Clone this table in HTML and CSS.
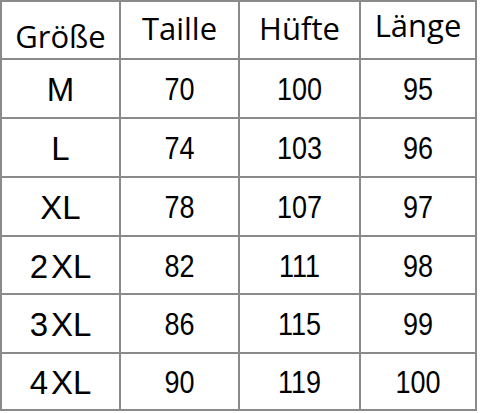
FILE: index.html
```html
<!DOCTYPE html>
<html lang="de">
<head>
<meta charset="utf-8">
<title>Größentabelle</title>
<link rel="stylesheet" href="styles.css">
</head>
<body>
<div class="chart">
  <div class="cell head h1"><span>Größe</span></div>
  <div class="cell head h2"><span>Taille</span></div>
  <div class="cell head h3"><span>Hüfte</span></div>
  <div class="cell head h4"><span>Länge</span></div>

  <div class="cell size"><span>M</span></div>
  <div class="cell num"><span>70</span></div>
  <div class="cell num"><span>100</span></div>
  <div class="cell num"><span>95</span></div>

  <div class="cell size"><span>L</span></div>
  <div class="cell num"><span>74</span></div>
  <div class="cell num"><span>103</span></div>
  <div class="cell num"><span>96</span></div>

  <div class="cell size"><span>XL</span></div>
  <div class="cell num"><span>78</span></div>
  <div class="cell num"><span>107</span></div>
  <div class="cell num"><span>97</span></div>

  <div class="cell size"><span><b class="n">2</b>XL</span></div>
  <div class="cell num"><span>82</span></div>
  <div class="cell num"><span>111</span></div>
  <div class="cell num"><span>98</span></div>

  <div class="cell size"><span><b class="n">3</b>XL</span></div>
  <div class="cell num"><span>86</span></div>
  <div class="cell num"><span>115</span></div>
  <div class="cell num"><span>99</span></div>

  <div class="cell size"><span><b class="n">4</b>XL</span></div>
  <div class="cell num"><span>90</span></div>
  <div class="cell num"><span>119</span></div>
  <div class="cell num"><span>100</span></div>
</div>
</body>
</html>
```
FILE: styles.css
```css
html, body {
  margin: 0;
  padding: 0;
  background: #ffffff;
}

.chart {
  display: grid;
  grid-template-columns: 117px 117px 119px 114px;
  grid-template-rows: 56px 57px 57px 57px 56px 57px 55px;
  gap: 2px;
  padding: 2px;
  width: max-content;
  background: #8a8a8a;
}

.cell {
  background: #ffffff;
  display: flex;
  align-items: center;
  justify-content: center;
  color: #000000;
}

.head {
  font-family: "Open Sans", "Noto Sans", sans-serif;
  font-size: 31px;
  align-items: flex-start;
}

.h1 { padding-top: 13px; font-size: 31px; }
.h2 { padding-top: 5px; }
.h3 { padding-top: 5px; }
.h4 { padding-top: 2px; }

.size {
  font-family: "Liberation Sans", Arial, sans-serif;
  font-size: 33px;
  padding-top: 3px;
}

.size .n {
  font-weight: normal;
  margin-right: 3px;
}

.num {
  font-family: "Liberation Sans", Arial, sans-serif;
  font-size: 27px;
  padding-top: 4px;
}

.num span {
  display: inline-block;
  transform: scaleY(1.15);
}
```
